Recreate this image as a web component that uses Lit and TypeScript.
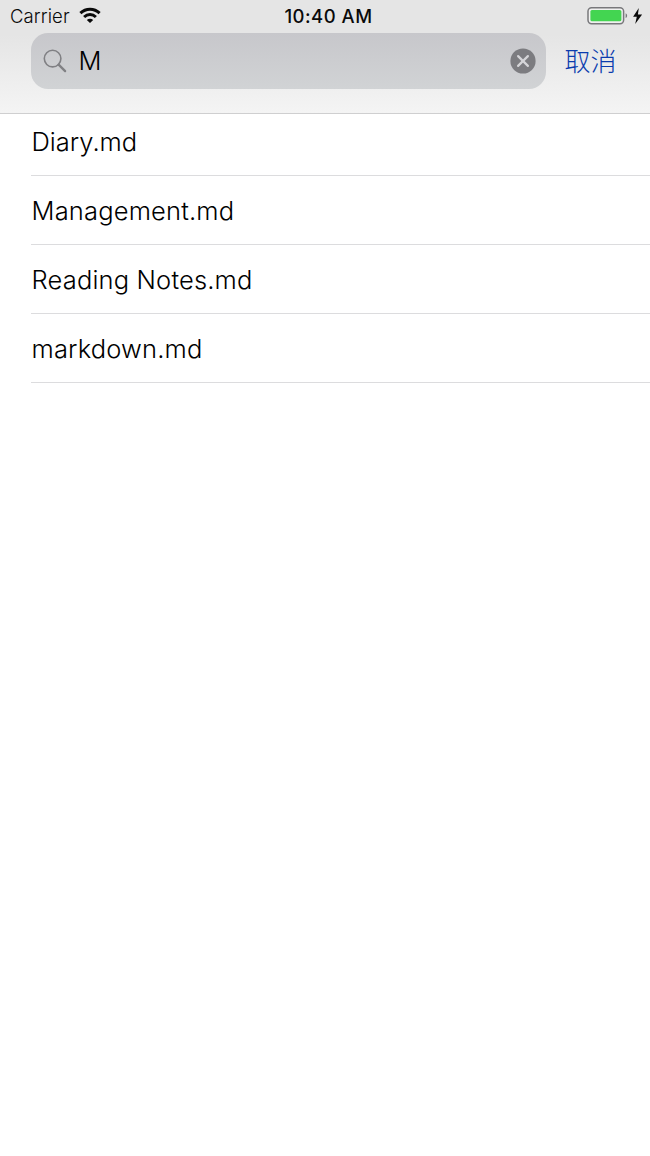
import { LitElement, html, css } from "lit";
import { customElement, property, state } from "lit/decorators.js";

@customElement("status-bar")
class StatusBar extends LitElement {
  static styles = css`
    :host { display: block; height: 33px; }
    .bar { display: grid; grid-template-columns: 1fr auto 1fr; height: 33px; color: #0a0a0a; padding: 0 7px 0 10px; box-sizing: border-box; }
    .left, .right { display: flex; align-items: flex-start; }
    .right { justify-content: flex-end; padding-top: 6px; }
    .carrier { font-size: 18.5px; font-weight: 300; line-height: 33px; letter-spacing: 0.1px; }
    .time { font-size: 18.5px; font-weight: 500; line-height: 33px; letter-spacing: 0.5px; padding-left: 4px; }
    .wifi { margin: 7px 0 0 9px; }
    svg { display: block; }
  `;
  render() {
    return html`<div class="bar">
      <div class="left">
        <span class="carrier">Carrier</span>
        <svg class="wifi" width="22" height="17" viewBox="0 0 22 17" fill="none" stroke="#0a0a0a" stroke-width="3">
          <path d="M1.4 6.1C6.8 .8 15.2 .8 20.6 6.1" />
          <path d="M5.1 10C8.5 6.8 13.5 6.8 16.9 10" />
          <path d="M7.8 12.9C9.6 11.2 12.4 11.2 14.2 12.9L11 16.1Z" fill="#0a0a0a" stroke="none" />
        </svg>
      </div>
      <span class="time">10:40 AM</span>
      <div class="right">
        <svg width="56" height="20" viewBox="0 0 56 20">
          <rect x="1" y="1.7" width="35.6" height="16" rx="3.6" fill="#f0f0f0" stroke="#78787b" stroke-width="1.5" />
          <rect x="3.4" y="4" width="31" height="11.3" rx="1.6" fill="#43d551" />
          <path d="M38.6 7.2C40.6 8 40.6 11.2 38.6 12Z" fill="#78787b" />
          <path d="M51.8 2.1L46.1 10.7H49.8L48.2 17.9L55.1 8.5H50.9Z" fill="#0a0a0a" />
        </svg>
      </div>
    </div>`;
  }
}

@customElement("search-bar")
class SearchBar extends LitElement {
  @property() value = "";
  static styles = css`
    :host { display: block; }
    .row { display: flex; align-items: flex-start; padding-left: 31px; height: 56px; }
    .field { display: flex; align-items: center; width: 515px; height: 56px; border-radius: 17px; background: linear-gradient(#c7c7cb, #d1d3d5); box-sizing: border-box; padding: 0 10px 0 12px; }
    .value { flex: 1; margin-left: 11.5px; font-size: 25.5px; font-weight: 350; line-height: 56px; color: #000; }
    .cancel { margin-left: 18.5px; font: 300 26px/54px "Noto Sans CJK SC", sans-serif; color: #0a3cae; }
    svg { display: block; flex: none; }
  `;
  render() {
    return html`<div class="row">
      <div class="field">
        <svg width="24" height="26" viewBox="0 0 24 26" fill="none" stroke="#808084">
          <circle cx="9.6" cy="10.6" r="8.3" stroke-width="1.6" />
          <path d="M15.6 16.6L22.1 23.1" stroke-width="2.3" stroke-linecap="round" />
        </svg>
        <span class="value">${this.value}</span>
        <svg width="26" height="26" viewBox="0 0 26 26">
          <circle cx="13" cy="13" r="12.6" fill="#7c7c80" />
          <path d="M8.1 8.1L17.9 17.9M17.9 8.1L8.1 17.9" stroke="#d5d5d8" stroke-width="2.2" stroke-linecap="round" />
        </svg>
      </div>
      <span class="cancel">取消</span>
    </div>`;
  }
}

@customElement("file-list")
class FileListView extends LitElement {
  @property({ attribute: false }) files: string[] = [];
  static styles = css`
    :host { display: block; padding-left: 31px; }
    .item { box-sizing: border-box; height: 69px; line-height: 70px; padding-left: 0.5px; border-bottom: 1px solid #dcdcde; font-size: 25.5px; font-weight: 300; letter-spacing: 0.17px; color: #000; }
    .item:first-child { height: 62px; line-height: 55px; letter-spacing: 0; }
  `;
  render() {
    return html`${this.files.map((f) => html`<div class="item">${f}</div>`)}`;
  }
}

@customElement("app-root")
class AppRoot extends LitElement {
  @state() private query = "M";
  @state() private files = ["Diary.md", "Management.md", "Reading Notes.md", "markdown.md"];
  static styles = css`
    :host { display: block; height: 1156px; background: #fff; font-family: Inter, "Noto Sans CJK SC", sans-serif; overflow: hidden; }
    .header { box-sizing: border-box; height: 114px; border-bottom: 1px solid #cfcfd0; background: linear-gradient(#e5e5e5 0, #e5e5e5 35px, #f4f4f4 113px); }
  `;
  render() {
    return html`<div class="header">
        <status-bar></status-bar>
        <search-bar .value=${this.query}></search-bar>
      </div>
      <file-list .files=${this.files}></file-list>`;
  }
}
